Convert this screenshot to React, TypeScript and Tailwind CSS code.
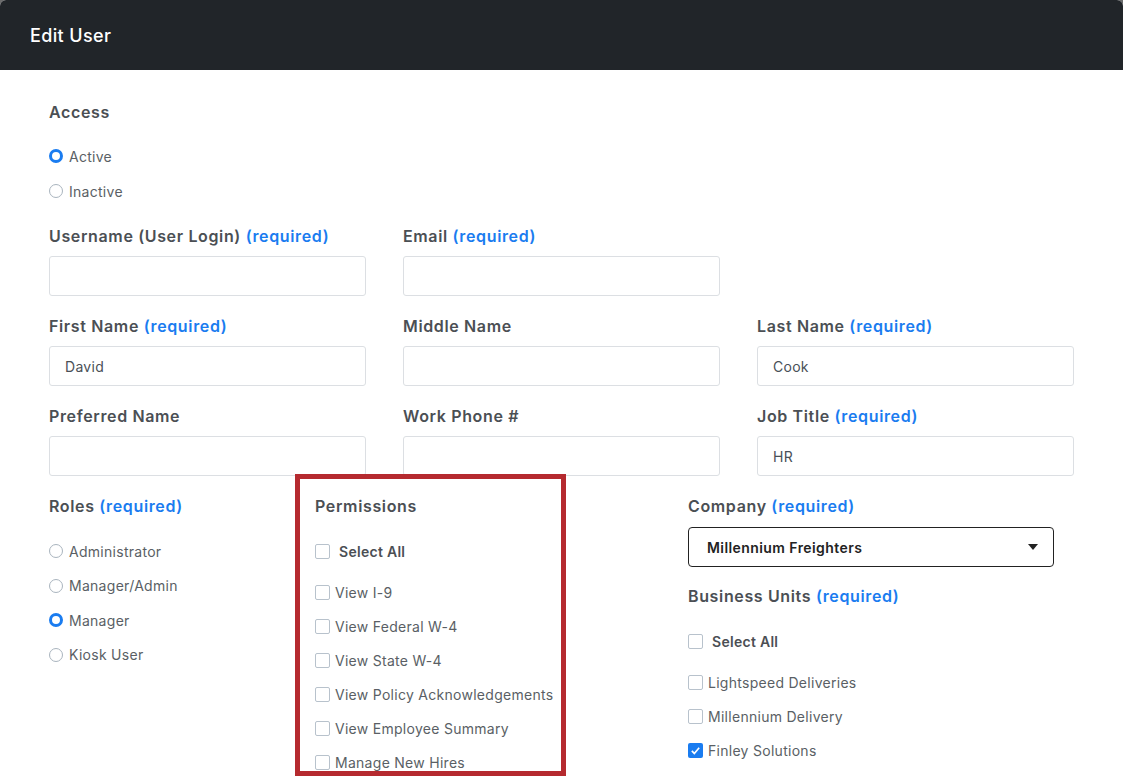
import React from "react";

const Req = () => <span className="text-[#1a7cf0]">(required)</span>;

const Label = ({ children }: { children: React.ReactNode }) => (
  <div className="text-[16px] font-semibold tracking-[0.04em] text-[#4b4f54] leading-[20px] h-[20px] whitespace-nowrap">{children}</div>
);

const Input = ({ value = "" }: { value?: string }) => (
  <div className="mt-[10px] h-[40px] border border-[#dcdfe3] rounded-[3px] flex items-center px-[15px] text-[14px] tracking-[0.02em] text-[#495057]">{value}</div>
);

const Field = ({ label, value }: { label: React.ReactNode; value?: string }) => (
  <div className="w-[317px]">
    <Label>{label}</Label>
    <Input value={value} />
  </div>
);

const Radio = ({ checked, label }: { checked?: boolean; label: string }) => (
  <div className="flex items-center h-[20px] text-[14px] tracking-[0.02em] text-[#5a5f65]">
    <span className={"w-[14px] h-[14px] rounded-full mr-[6px] " + (checked ? "border-[3px] border-[#1a7cf0]" : "border border-[#a9b4be]")} />
    {label}
  </div>
);

const Check = ({ checked, label, bold }: { checked?: boolean; label: string; bold?: boolean }) => (
  <div className={"flex items-center h-[20px] text-[14px] tracking-[0.02em] whitespace-nowrap " + (bold ? "font-semibold text-[#4b4f54]" : "text-[#5a5f65]")}>
    {checked ? (
      <span className="w-[15px] h-[15px] rounded-[2px] bg-[#1a7cf0] mr-[5px] flex items-center justify-center">
        <svg width="11" height="11" viewBox="0 0 12 12"><path d="M2 6.5l2.7 2.7L10 3" stroke="white" strokeWidth="1.8" fill="none" /></svg>
      </span>
    ) : (
      <span className={"w-[15px] h-[15px] rounded-[2px] border border-[#b8c2cc] " + (bold ? "mr-[9px]" : "mr-[5px]")} />
    )}
    {label}
  </div>
);

export default function App() {
  return (
    <div className="w-[1123px] h-[779px] overflow-hidden bg-[#6b6b6b]" style={{ fontFamily: "Inter, 'Noto Sans', sans-serif" }}>
      <div className="h-full bg-white rounded-t-[6px] overflow-hidden">
        <div className="h-[70px] bg-[#212529] flex items-center px-[30px] text-white text-[18px] font-medium tracking-[0.02em]">Edit User</div>
        <div className="pl-[49px] pt-[32px]">
          <Label>Access</Label>
          <div className="mt-[24px] flex flex-col gap-[15px]">
            <Radio checked label="Active" />
            <Radio label="Inactive" />
          </div>
          <div className="mt-[25px] flex gap-[37px]">
            <Field label={<>Username (User Login) <Req /></>} />
            <Field label={<>Email <Req /></>} />
          </div>
          <div className="mt-[20px] flex gap-[37px]">
            <Field label={<>First Name <Req /></>} value="David" />
            <Field label="Middle Name" />
            <Field label={<>Last Name <Req /></>} value="Cook" />
          </div>
          <div className="mt-[20px] flex gap-[37px]">
            <Field label="Preferred Name" />
            <Field label="Work Phone #" />
            <Field label={<>Job Title <Req /></>} value="HR" />
          </div>
          <div className="flex">
            <div className="w-[246px] pt-[20px]">
              <Label>Roles <Req /></Label>
              <div className="mt-[25px] flex flex-col gap-[14.5px]">
                <Radio label="Administrator" />
                <Radio label="Manager/Admin" />
                <Radio checked label="Manager" />
                <Radio label="Kiosk User" />
              </div>
            </div>
            <div className="mt-[-2px] w-[271px] h-[302px] border-[5px] border-[#b52a2f] pl-[15px] pt-[17px] overflow-hidden">
              <Label>Permissions</Label>
              <div className="mt-[25px]"><Check bold label="Select All" /></div>
              <div className="mt-[21px] flex flex-col gap-[14.2px]">
                <Check label="View I-9" />
                <Check label="View Federal W-4" />
                <Check label="View State W-4" />
                <Check label="View Policy Acknowledgements" />
                <Check label="View Employee Summary" />
                <Check label="Manage New Hires" />
              </div>
            </div>
            <div className="ml-[122px] w-[366px] pt-[20px]">
              <Label>Company <Req /></Label>
              <div className="mt-[11px] h-[40px] border border-[#222] rounded-[4px] flex items-center justify-between pl-[18px] pr-[15px] text-[14px] tracking-[0.03em] font-semibold text-[#222]">
                Millennium Freighters
                <svg width="10" height="6" viewBox="0 0 10 6"><path d="M0 0h10L5 6z" fill="#222" /></svg>
              </div>
              <div className="mt-[19px]"><Label>Business Units <Req /></Label></div>
              <div className="mt-[25px]"><Check bold label="Select All" /></div>
              <div className="mt-[21px] flex flex-col gap-[14px]">
                <Check label="Lightspeed Deliveries" />
                <Check label="Millennium Delivery" />
                <Check checked label="Finley Solutions" />
              </div>
            </div>
          </div>
        </div>
      </div>
    </div>
  );
}
